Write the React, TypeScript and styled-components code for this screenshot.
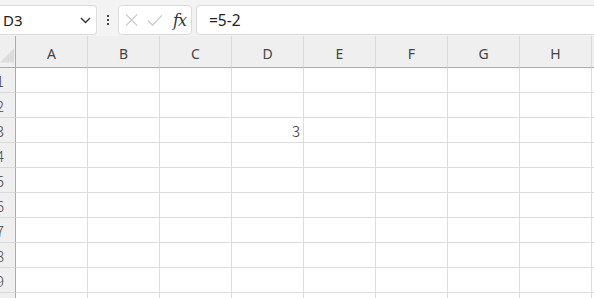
import React from 'react';
import styled, { createGlobalStyle } from 'styled-components';

const columns = ['A', 'B', 'C', 'D', 'E', 'F', 'G', 'H', 'I'];
const rows = [1, 2, 3, 4, 5, 6, 7, 8, 9, 10];
const values: Record<string, string> = { D3: '3' };

const GlobalStyle = createGlobalStyle`
    html, body {
        margin: 0;
        padding: 0;
        background: #ffffff;
        overflow: hidden;
    }
    body {
        font-family: 'Noto Sans', 'Liberation Sans', sans-serif;
    }
`;

const Page = styled.div`
    width: 594px;
    height: 298px;
    overflow: hidden;
    display: flex;
    flex-direction: column;
`;

const Toolbar = styled.div`
    display: flex;
    align-items: stretch;
    height: 36px;
    padding: 5px 0 1px;
    box-sizing: border-box;
    background: #f3f3f3;
`;

const Box = styled.div`
    display: flex;
    align-items: center;
    background: #ffffff;
    border: 1px solid #dcdcdc;
    border-radius: 4px;
    box-sizing: border-box;
`;

const NameBox = styled(Box)`
    width: 97px;
    border-left: none;
    border-radius: 0 4px 4px 0;
    padding: 0 5px 0 3px;
    justify-content: space-between;
    font-size: 15px;
    color: #222;
`;

const Grip = styled.div`
    width: 21px;
    display: flex;
    flex-direction: column;
    align-items: center;
    justify-content: center;
    gap: 2px;

    span {
        width: 2px;
        height: 2px;
        background: #444;
    }
`;

const FxBox = styled(Box)`
    width: 74px;
    padding: 0 5px 0 6px;
    gap: 9px;
`;

const FormulaBox = styled(Box)`
    flex: 1;
    margin-left: 4px;
    border-right: none;
    border-radius: 4px 0 0 4px;
    padding-left: 12px;
    font-size: 15.5px;
    color: #222;
`;

const FxLabel = styled.span`
    margin-left: 1px;
    font-family: 'DejaVu Serif', 'Liberation Serif', serif;
    font-style: italic;
    font-size: 16px;
    color: #333;
    letter-spacing: -1px;
`;

const Sheet = styled.div`
    display: grid;
    grid-template-columns: 16px repeat(9, 72px);
    grid-template-rows: 32px repeat(10, 25px);
    flex: 1;
    overflow: hidden;
`;

const Corner = styled.div`
    display: flex;
    align-items: flex-end;
    justify-content: flex-end;
    padding: 0 1px 3px 0;
    background: #efefef;
    border-right: 1px solid #ababab;
    border-bottom: 1px solid #ababab;
    box-sizing: border-box;
    overflow: hidden;
`;

const ColHeader = styled.div`
    display: flex;
    align-items: center;
    justify-content: center;
    padding-top: 4px;
    background: #efefef;
    border-bottom: 1px solid #ababab;
    border-right: 1px solid #dadada;
    box-sizing: border-box;
    font-size: 14px;
    color: #444;
`;

const RowHeader = styled.div`
    display: flex;
    align-items: center;
    justify-content: flex-end;
    padding-right: 11px;
    background: #efefef;
    border-right: 1px solid #ababab;
    border-bottom: 1px solid #dadada;
    box-sizing: border-box;
    overflow: hidden;
    font-family: 'Noto Sans CJK JP', 'Noto Sans', sans-serif;
    font-weight: 300;
    font-size: 15px;
    color: #444;
`;

const Cell = styled.div<{ $numeric?: boolean }>`
    display: flex;
    align-items: center;
    justify-content: ${p => (p.$numeric ? 'flex-end' : 'flex-start')};
    padding: 0 3px;
    border-right: 1px solid #dcdcdc;
    border-bottom: 1px solid #dcdcdc;
    box-sizing: border-box;
    font-family: 'Noto Sans CJK JP', 'Noto Sans', sans-serif;
    font-weight: 300;
    font-size: 15px;
    color: #222;
`;

const Chevron = () => (
    <svg width="11" height="7" viewBox="0 0 11 7">
        <path d="M1 1 L5.5 5.5 L10 1" fill="none" stroke="#333" strokeWidth="1.4" />
    </svg>
);

const CancelIcon = () => (
    <svg width="14" height="14" viewBox="0 0 14 14">
        <path d="M1 1 L13 13 M13 1 L1 13" stroke="#c6c6c6" strokeWidth="1.2" fill="none" />
    </svg>
);

const CheckIcon = () => (
    <svg width="17" height="13" viewBox="0 0 17 13">
        <path d="M1 6.5 L6 11.5 L16 1" stroke="#c6c6c6" strokeWidth="1.2" fill="none" />
    </svg>
);

const SelectAll = () => (
    <svg width="17" height="17" viewBox="0 0 17 17">
        <polygon points="17,0 17,17 0,17" fill="#dcdcdc" />
    </svg>
);

// the last column only peeks in at the right edge, so its label stays out of view
const visibleLabel = (c: string) => (c === 'I' ? '' : c);

const App = () => (
    <>
        <GlobalStyle />
        <Page>
            <Toolbar>
                <NameBox>
                    <span>D3</span>
                    <Chevron />
                </NameBox>
                <Grip>
                    <span />
                    <span />
                    <span />
                </Grip>
                <FxBox>
                    <CancelIcon />
                    <CheckIcon />
                    <FxLabel>fx</FxLabel>
                </FxBox>
                <FormulaBox>=5-2</FormulaBox>
            </Toolbar>
            <Sheet>
                <Corner>
                    <SelectAll />
                </Corner>
                {columns.map(c => (
                    <ColHeader key={c}>{visibleLabel(c)}</ColHeader>
                ))}
                {rows.map(r => (
                    <React.Fragment key={r}>
                        <RowHeader>{r}</RowHeader>
                        {columns.map(c => {
                            const v = values[c + r];
                            return (
                                <Cell key={c + r} $numeric={v !== undefined}>
                                    {v}
                                </Cell>
                            );
                        })}
                    </React.Fragment>
                ))}
            </Sheet>
        </Page>
    </>
);

export default App;
